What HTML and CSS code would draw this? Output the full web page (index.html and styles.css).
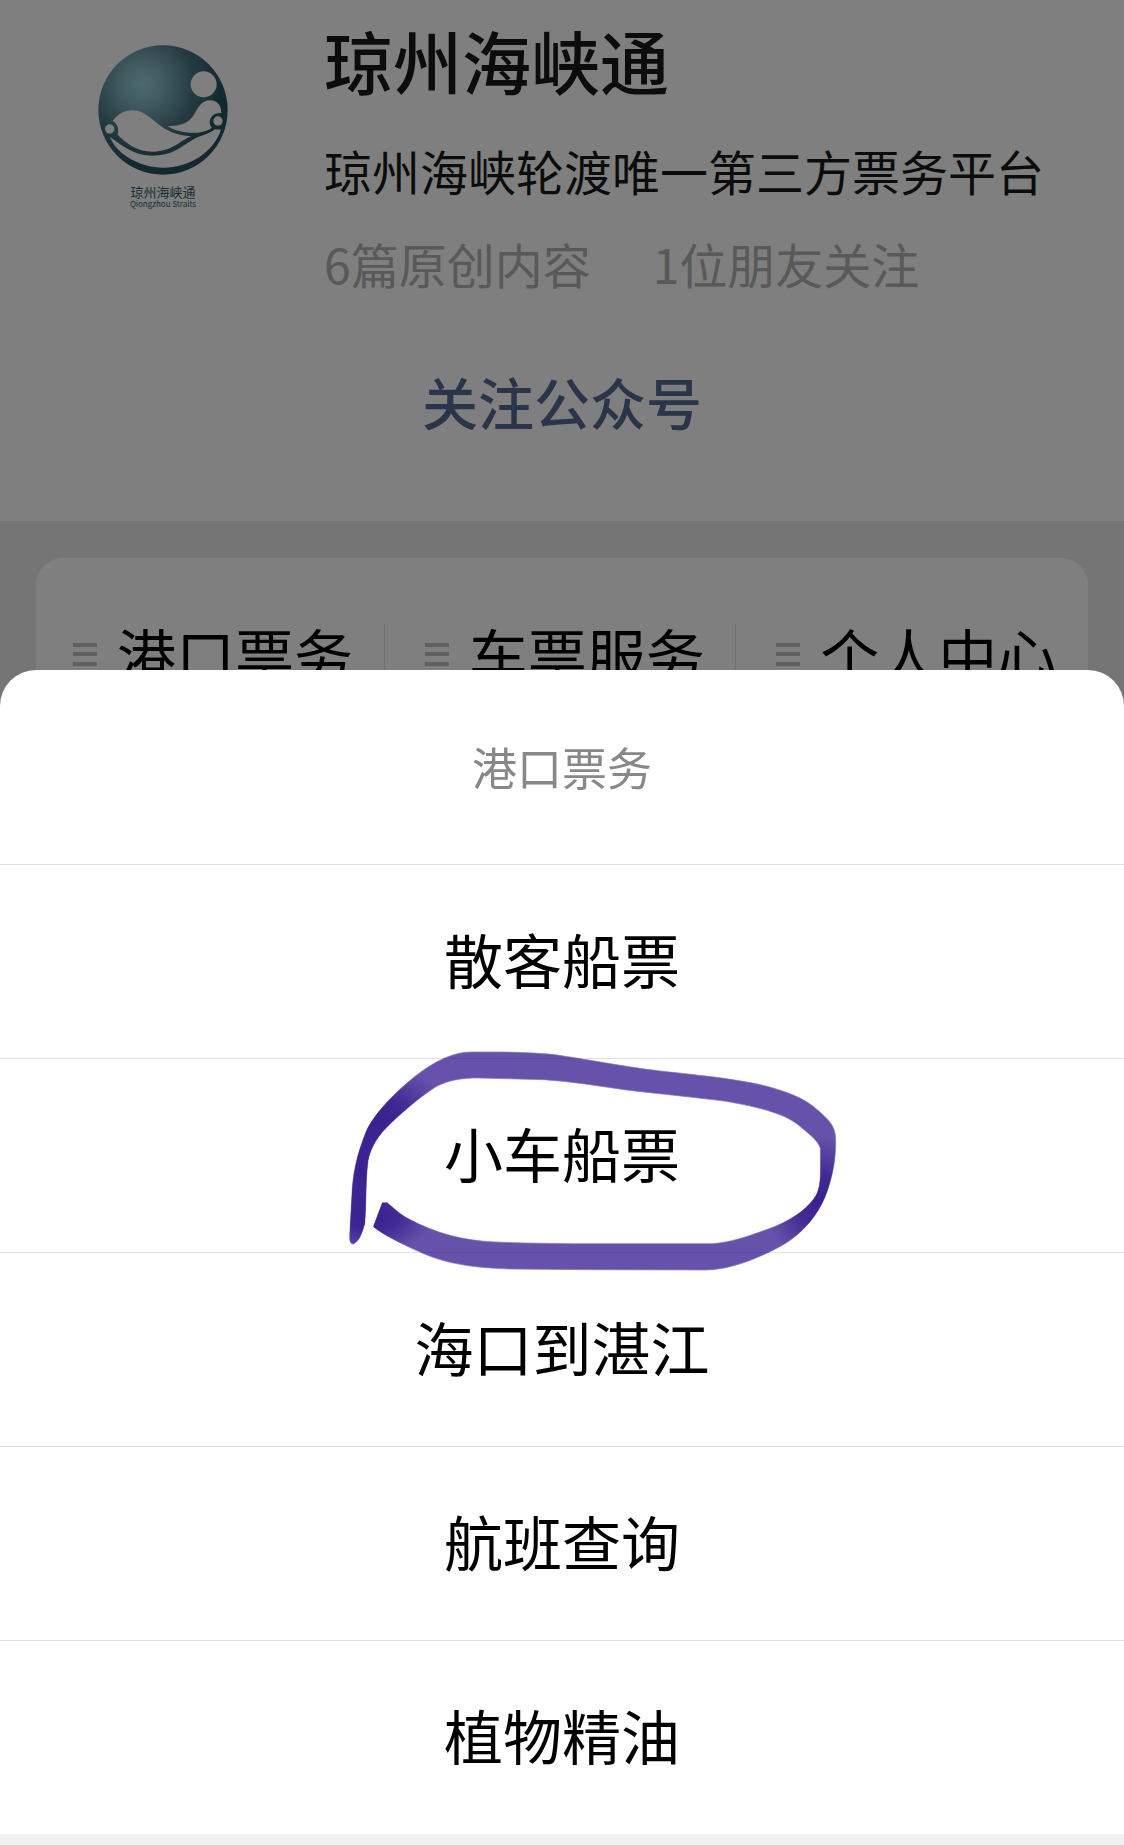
FILE: index.html
```html
<!DOCTYPE html>
<html lang="zh-CN">
<head>
    <meta charset="UTF-8">
    <meta name="viewport" content="width=device-width, initial-scale=1.0">
    <title>琼州海峡通</title>
    <link rel="stylesheet" href="styles.css">
</head>
<body>
    <div class="profile">
        <div class="profile-top">
            <figure class="logo">
                <svg viewBox="55 43 390 390" aria-hidden="true">
                    <defs>
                        <radialGradient id="sea" gradientUnits="userSpaceOnUse" cx="188" cy="160" r="240">
                            <stop offset="0" stop-color="#9cd6e0"/>
                            <stop offset="0.3" stop-color="#7cb0bc"/>
                            <stop offset="0.65" stop-color="#4a7684"/>
                            <stop offset="1" stop-color="#28535f"/>
                        </radialGradient>
                    </defs>
                    <circle cx="250" cy="238" r="194" fill="url(#sea)"/>
                    <g fill="#fff">
                        <circle cx="372" cy="161" r="39"/>
                        <circle cx="90" cy="295" r="14"/>
                        <circle cx="415" cy="271" r="14"/>
                        <path d="M99 271 C116 247 139 239 158 239 C188 239 207 258 232 277 C262 302 290 314 334 317 C300 331 276 363 220 363 C170 363 137 335 114 312 C119 291 111 276 99 271 Z"/>
                        <path d="M264 286 C307 287 329 276 346 247 C358 225 370 209 391 209 C409 209 425 221 425 247 C404 245 390 258 390 276 C391 284 394 288 397 291 C375 306 350 307 330 306 C303 304 282 298 264 286 Z"/>
                        <path d="M91 319 C128 345 160 373 214 375 C276 376 300 351 338 328 C362 314 389 311 405 296 L424 297 C403 362 331 411 251 411 C185 411 112 374 91 319 Z"/>
                    </g>
                </svg>
                <figcaption>
                    <span class="logo-cn">琼州海峡通</span>
                    <span class="logo-en">Qiongzhou Straits</span>
                </figcaption>
            </figure>
            <div class="info">
                <h1>琼州海峡通</h1>
                <p class="desc">琼州海峡轮渡唯一第三方票务平台</p>
                <p class="meta"><span>6篇原创内容</span><span>1位朋友关注</span></p>
            </div>
        </div>
        <button class="follow-btn">关注公众号</button>
    </div>

    <div class="card">
        <div class="menu">
            <button><span class="bars"></span>港口票务</button>
            <button><span class="bars"></span>车票服务</button>
            <button><span class="bars"></span>个人中心</button>
        </div>
    </div>

    <div class="mask">
        <div class="sheet">
            <h2>港口票务</h2>
            <ul>
                <li><button>散客船票</button></li>
                <li class="marked">
                    <button>小车船票</button>
                    <svg class="circle-mark" viewBox="0 0 1568 780" preserveAspectRatio="none" aria-hidden="true">
                        <defs>
                            <radialGradient id="dark">
                                <stop offset="0" stop-color="#39208f"/>
                                <stop offset="0.4" stop-color="#39208f" stop-opacity="0.8"/>
                                <stop offset="1" stop-color="#39208f" stop-opacity="0"/>
                            </radialGradient>
                            <path id="stroke" d="M68 642 C56 642 56 625 58 600 L63 510 C65 430 78 375 105 305 C125 258 177 199 240 145 C290 103 350 66 410 66 L500 66 C560 67 620 70 660 75 C730 86 810 101 900 115 C1000 130 1140 139 1250 164 C1320 182 1375 202 1415 239 C1443 264 1467 286 1468 322 C1470 370 1463 422 1448 470 C1423 555 1370 612 1310 648 C1240 687 1160 720 1090 720 L740 719 L520 717 C400 712 330 700 250 661 C200 637 158 616 126 590 L152 518 L166 518 C185 534 200 550 225 565 C310 612 390 632 480 636 C560 640 640 640 710 641 L1110 641 C1170 637 1230 613 1290 590 C1350 565 1394 529 1412 495 C1427 464 1424 430 1424 355 C1417 330 1387 309 1360 285 C1315 248 1240 231 1150 214 C1060 202 960 192 860 180 C780 168 700 154 620 149 L430 144 C380 144 345 151 310 169 C260 200 185 268 148 311 C128 337 112 368 109 405 C104 450 105 525 101 580 C95 602 87 634 68 642 Z"/>
                            <clipPath id="stroke-clip"><use href="#stroke"/></clipPath>
                        </defs>
                        <use href="#stroke" fill="#6652aa" stroke="#8878bd" stroke-width="2"/>
                        <g clip-path="url(#stroke-clip)" fill="url(#dark)">
                            <ellipse cx="90" cy="420" rx="90" ry="250"/>
                            <ellipse cx="150" cy="270" rx="190" ry="170"/>
                            <ellipse cx="1420" cy="510" rx="160" ry="190"/>
                            <ellipse cx="130" cy="560" rx="170" ry="110"/>
                        </g>
                        <path d="M0 85.5H1568M0 667.5H1568" clip-path="url(#stroke-clip)" stroke="#50428a" stroke-width="3" opacity="0.5"/>
                    </svg>
                </li>
                <li><button>海口到湛江</button></li>
                <li><button>航班查询</button></li>
                <li><button>植物精油</button></li>
            </ul>
            <div class="sheet-gap"></div>
        </div>
    </div>
</body>
</html>
```
FILE: styles.css
```css
* {
    box-sizing: border-box;
}
body {
    margin: 0;
    min-height: 100vh;
    background-color: #ebebeb;
    font-family: "Noto Sans CJK SC", sans-serif;
    color: #000;
}
h1, h2, p, ul, figure {
    margin: 0;
    padding: 0;
}
ul {
    list-style: none;
}
button {
    padding: 0;
    border: none;
    background: none;
    font-family: inherit;
    color: inherit;
    cursor: pointer;
}
.profile {
    display: flex;
    flex-direction: column;
    align-items: center;
    padding: 24px 0 88px;
    background-color: #fff;
}
.profile-top {
    display: flex;
    align-self: stretch;
    gap: 96px;
    padding-left: 98px;
}
.logo {
    width: 130px;
    padding-top: 21px;
    flex-shrink: 0;
}
.logo svg {
    display: block;
    width: 130px;
    height: 130px;
}
.logo figcaption {
    display: flex;
    flex-direction: column;
    align-items: center;
    padding-top: 9px;
    color: #2c5968;
}
.logo-cn {
    font-size: 13px;
    line-height: 16px;
}
.logo-en {
    font-size: 8px;
    line-height: 8px;
}
.info h1 {
    font-size: 69px;
    line-height: 72px;
    font-weight: 500;
    color: #191919;
}
.desc, .meta {
    font-size: 48px;
    line-height: 56px;
}
.desc {
    margin-top: 46px;
    color: #191919;
}
.meta {
    display: flex;
    gap: 62px;
    margin-top: 37px;
    color: #b2b2b2;
}
.follow-btn {
    margin-top: 78px;
    font-size: 56px;
    line-height: 64px;
    font-weight: 500;
    color: #576b95;
}
.card {
    margin: 37px 36px 0;
    padding: 66px 0;
    border-radius: 27px;
    background-color: #fff;
}
.menu {
    display: grid;
    grid-template-columns: repeat(3, 1fr);
    margin-left: -3px;
}
.menu button {
    display: flex;
    align-items: center;
    gap: 20px;
    padding-left: 40px;
    border-right: 1px solid #e5e5e5;
    font-size: 59px;
    line-height: 60px;
    white-space: nowrap;
}
.menu button:last-child {
    border-right: none;
}
.bars {
    width: 24px;
    height: 23px;
    flex-shrink: 0;
    border-top: 4px solid #bebebe;
    border-bottom: 4px solid #bebebe;
    background: linear-gradient(#bebebe, #bebebe) center / 24px 4px no-repeat;
}
.mask {
    position: fixed;
    inset: 0;
    display: flex;
    flex-direction: column;
    justify-content: flex-end;
    background-color: rgba(0, 0, 0, 0.5);
}
.sheet {
    overflow: hidden;
    border-radius: 36px 36px 0 0;
    background-color: #fff;
    text-align: center;
}
.sheet h2 {
    font-size: 45px;
    line-height: 194px;
    font-weight: 400;
    color: #888;
}
.sheet li {
    border-top: 1px solid #e2e2e2;
}
.sheet li button {
    width: 100%;
    height: 193px;
    padding-bottom: 6px;
    font-size: 59px;
}
.marked {
    position: relative;
}
/* hand-drawn ring around the option */
.circle-mark {
    position: absolute;
    top: -29px;
    left: calc(50% - 232px);
    width: 540px;
    height: 260px;
    pointer-events: none;
}
.sheet-gap {
    height: 11px;
    background-color: #f1f1f1;
}
```
